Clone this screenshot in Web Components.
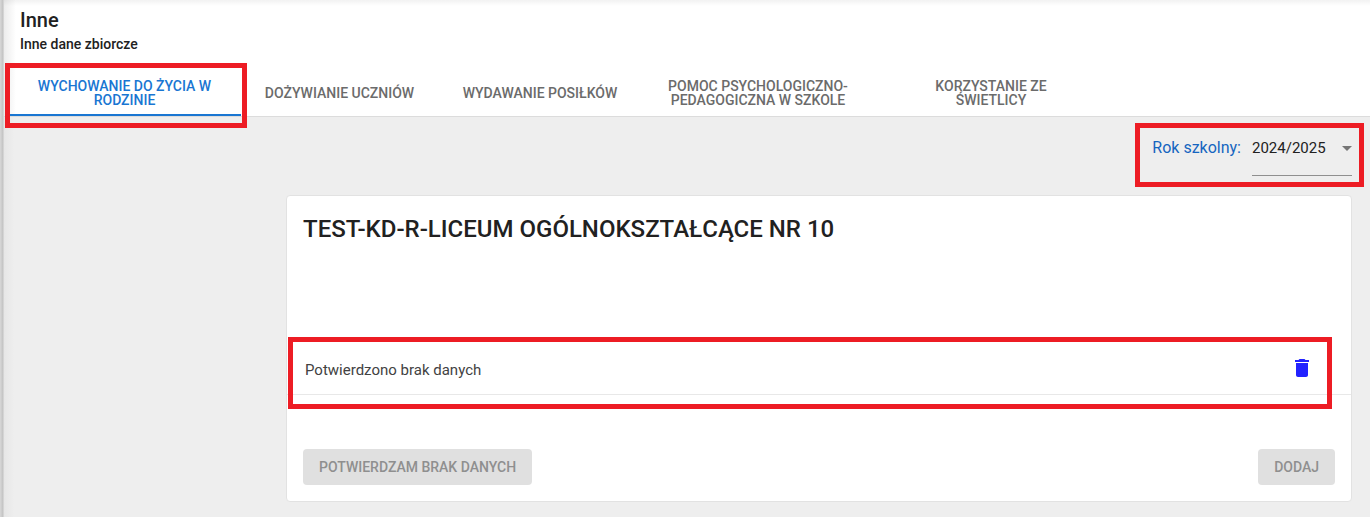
<!DOCTYPE html>
<html lang="pl">
<head>
<meta charset="utf-8">
<title>Inne</title>
<style>
    html, body { margin: 0; height: 100%; }
    body { font-family: Roboto, "Liberation Sans", sans-serif; background: #eeeeee; overflow: hidden; }
</style>
</head>
<body>
<app-page>
    <page-header slot="header" heading="Inne" sub="Inne dane zbiorcze"></page-header>
    <tab-bar slot="tabs">
        <tab-item active w="231" shift="2">WYCHOWANIE DO ŻYCIA W RODZINIE</tab-item>
        <tab-item w="197">DOŻYWIANIE UCZNIÓW</tab-item>
        <tab-item w="204">WYDAWANIE POSIŁKÓW</tab-item>
        <tab-item w="232">POMOC PSYCHOLOGICZNO-PEDAGOGICZNA W SZKOLE</tab-item>
        <tab-item w="234" pad="40">KORZYSTANIE ZE ŚWIETLICY</tab-item>
    </tab-bar>
    <year-select slot="year" label="Rok szkolny:" value="2024/2025"></year-select>
    <school-card slot="card" heading="TEST-KD-R-LICEUM OGÓLNOKSZTAŁCĄCE NR 10">
        <data-row>Potwierdzono brak danych</data-row>
        <flat-button slot="actions">POTWIERDZAM BRAK DANYCH</flat-button>
        <flat-button slot="actions">DODAJ</flat-button>
    </school-card>
    <mark-box slot="marks" style="left:5px;top:63px;width:242px;height:65px"></mark-box>
    <mark-box slot="marks" style="left:1135px;top:123px;width:229px;height:64px"></mark-box>
    <mark-box slot="marks" style="left:288px;top:337px;width:1044px;height:72px"></mark-box>
</app-page>

<script>
class AppPage extends HTMLElement {
    constructor() {
        super();
        this.attachShadow({ mode: 'open' });
        this.shadowRoot.innerHTML = `
            <style>
                :host { display: block; position: relative; height: 517px; box-sizing: border-box; padding-left: 4px;
                    background: linear-gradient(90deg, #d8d8d8, #c2c2c2 3px, #e6e6e6 4px, #eeeeee 14px); }
                .top { background: linear-gradient(90deg, #ececec, #fff 12px); border-bottom: 1px solid #dcdcdc; height: 116px;
                    display: flex; flex-direction: column; justify-content: space-between; }
                .main { padding: 7px 18px 0 282px; }
            </style>
            <div class="top">
                <slot name="header"></slot>
                <slot name="tabs"></slot>
            </div>
            <div class="main">
                <slot name="year"></slot>
                <slot name="card"></slot>
            </div>
            <slot name="marks"></slot>
        `;
    }
}

class PageHeader extends HTMLElement {
    constructor() {
        super();
        this.attachShadow({ mode: 'open' });
        this.shadowRoot.innerHTML = `
            <style>
                :host { display: block; padding: 8px 16px 0; color: #212121;
                    background: linear-gradient(rgba(0,0,0,.05), transparent 6px); }
                h1 { margin: 0; font-size: 20px; line-height: 24px; font-weight: 500; }
                p { margin: 2px 0 0; font-size: 14px; line-height: 20px; font-weight: 500; }
            </style>
            <h1>${this.getAttribute('heading')}</h1>
            <p>${this.getAttribute('sub')}</p>
        `;
    }
}

class TabBar extends HTMLElement {
    constructor() {
        super();
        this.attachShadow({ mode: 'open' });
        this.shadowRoot.innerHTML = `
            <style>:host { display: flex; padding-left: 6px; }</style>
            <slot></slot>
        `;
    }
}

class TabItem extends HTMLElement {
    constructor() {
        super();
        this.attachShadow({ mode: 'open' });
        this.shadowRoot.innerHTML = `
            <style>
                :host { display: flex; align-items: center; justify-content: center; box-sizing: border-box;
                    height: 52px; padding: 8px 16px 0; font-size: 14px; line-height: 14.500px; font-weight: 500;
                    text-align: center; color: #6b6b6b; border-bottom: 2px solid transparent; flex: none; }
                :host([active]) { color: #1976d2; border-bottom-color: #1976d2; }
            </style>
            <slot></slot>
        `;
        this.style.width = this.getAttribute('w') + 'px';
        if (this.hasAttribute('pad')) {
            this.style.paddingLeft = this.getAttribute('pad') + 'px';
            this.style.paddingRight = this.getAttribute('pad') + 'px';
        }
        // first tab's label sits a little left of its box centre
        if (this.hasAttribute('shift')) {
            this.style.paddingRight = 16 + Number(this.getAttribute('shift')) + 'px';
        }
    }
}

class YearSelect extends HTMLElement {
    constructor() {
        super();
        this.attachShadow({ mode: 'open' });
        this.shadowRoot.innerHTML = `
            <style>
                :host { display: flex; justify-content: flex-end; height: 71px; font-size: 15px; }
                .label { color: #1565c0; line-height: 48px; height: 48px; margin-right: 11px; font-size: 16px; }
                .field { width: 100px; height: 51px; border-bottom: 1px solid #8f8f8f; display: flex;
                    justify-content: space-between; align-items: flex-start; color: #212121; line-height: 48px; }
                .arrow { width: 0; height: 0; margin: 22px 0 0; border: 5px solid transparent; border-top-color: #757575; border-bottom: 0; }
            </style>
            <span class="label">${this.getAttribute('label')}</span>
            <div class="field"><span>${this.getAttribute('value')}</span><i class="arrow"></i></div>
        `;
    }
}

class SchoolCard extends HTMLElement {
    constructor() {
        super();
        this.attachShadow({ mode: 'open' });
        this.shadowRoot.innerHTML = `
            <style>
                :host { display: block; box-sizing: border-box; height: 307px; background: #fff; border-radius: 4px;
                    border: 1px solid #e2e2e2; padding-top: 17px; }
                h2 { margin: 0 16px; font-size: 24px; line-height: 32px; font-weight: 500; color: #212121; }
                .rows { margin-top: 100px; }
                .actions { display: flex; justify-content: space-between; padding: 0 16px; margin-top: 54px; }
            </style>
            <h2>${this.getAttribute('heading')}</h2>
            <div class="rows"><slot></slot></div>
            <div class="actions"><slot name="actions"></slot></div>
        `;
    }
}

class DataRow extends HTMLElement {
    constructor() {
        super();
        this.attachShadow({ mode: 'open' });
        this.shadowRoot.innerHTML = `
            <style>
                :host { display: flex; align-items: center; justify-content: space-between; height: 50px; box-sizing: border-box;
                    padding: 0 37px 0 18px; border-bottom: 1px solid #e8e8e8; font-size: 15px; color: #424242; }
                svg { display: block; width: 24px; height: 24px; fill: #2222ff; margin-top: -3px; }
            </style>
            <span><slot></slot></span>
            <svg viewBox="0 0 24 24"><path d="M6 19c0 1.100.9 2 2 2h8c1.100 0 2-.9 2-2V7H6v12zM19 4h-3.500l-1-1h-5l-1 1H5v2h14V4z"/></svg>
        `;
    }
}

class FlatButton extends HTMLElement {
    constructor() {
        super();
        this.attachShadow({ mode: 'open' });
        this.shadowRoot.innerHTML = `
            <style>
                :host { display: inline-flex; align-items: center; height: 36px; padding: 0 16px; border-radius: 4px;
                    background: #e0e0e0; color: #8f8f8f; font-size: 14px; font-weight: 500; }
            </style>
            <slot></slot>
        `;
    }
}

class MarkBox extends HTMLElement {
    constructor() {
        super();
        this.attachShadow({ mode: 'open' });
        this.shadowRoot.innerHTML = `
            <style>:host { display: block; position: absolute; box-sizing: border-box; border: 5px solid #ed1c24; }</style>
        `;
    }
}

customElements.define('app-page', AppPage);
customElements.define('page-header', PageHeader);
customElements.define('tab-bar', TabBar);
customElements.define('tab-item', TabItem);
customElements.define('year-select', YearSelect);
customElements.define('school-card', SchoolCard);
customElements.define('data-row', DataRow);
customElements.define('flat-button', FlatButton);
customElements.define('mark-box', MarkBox);
</script>
</body>
</html>
